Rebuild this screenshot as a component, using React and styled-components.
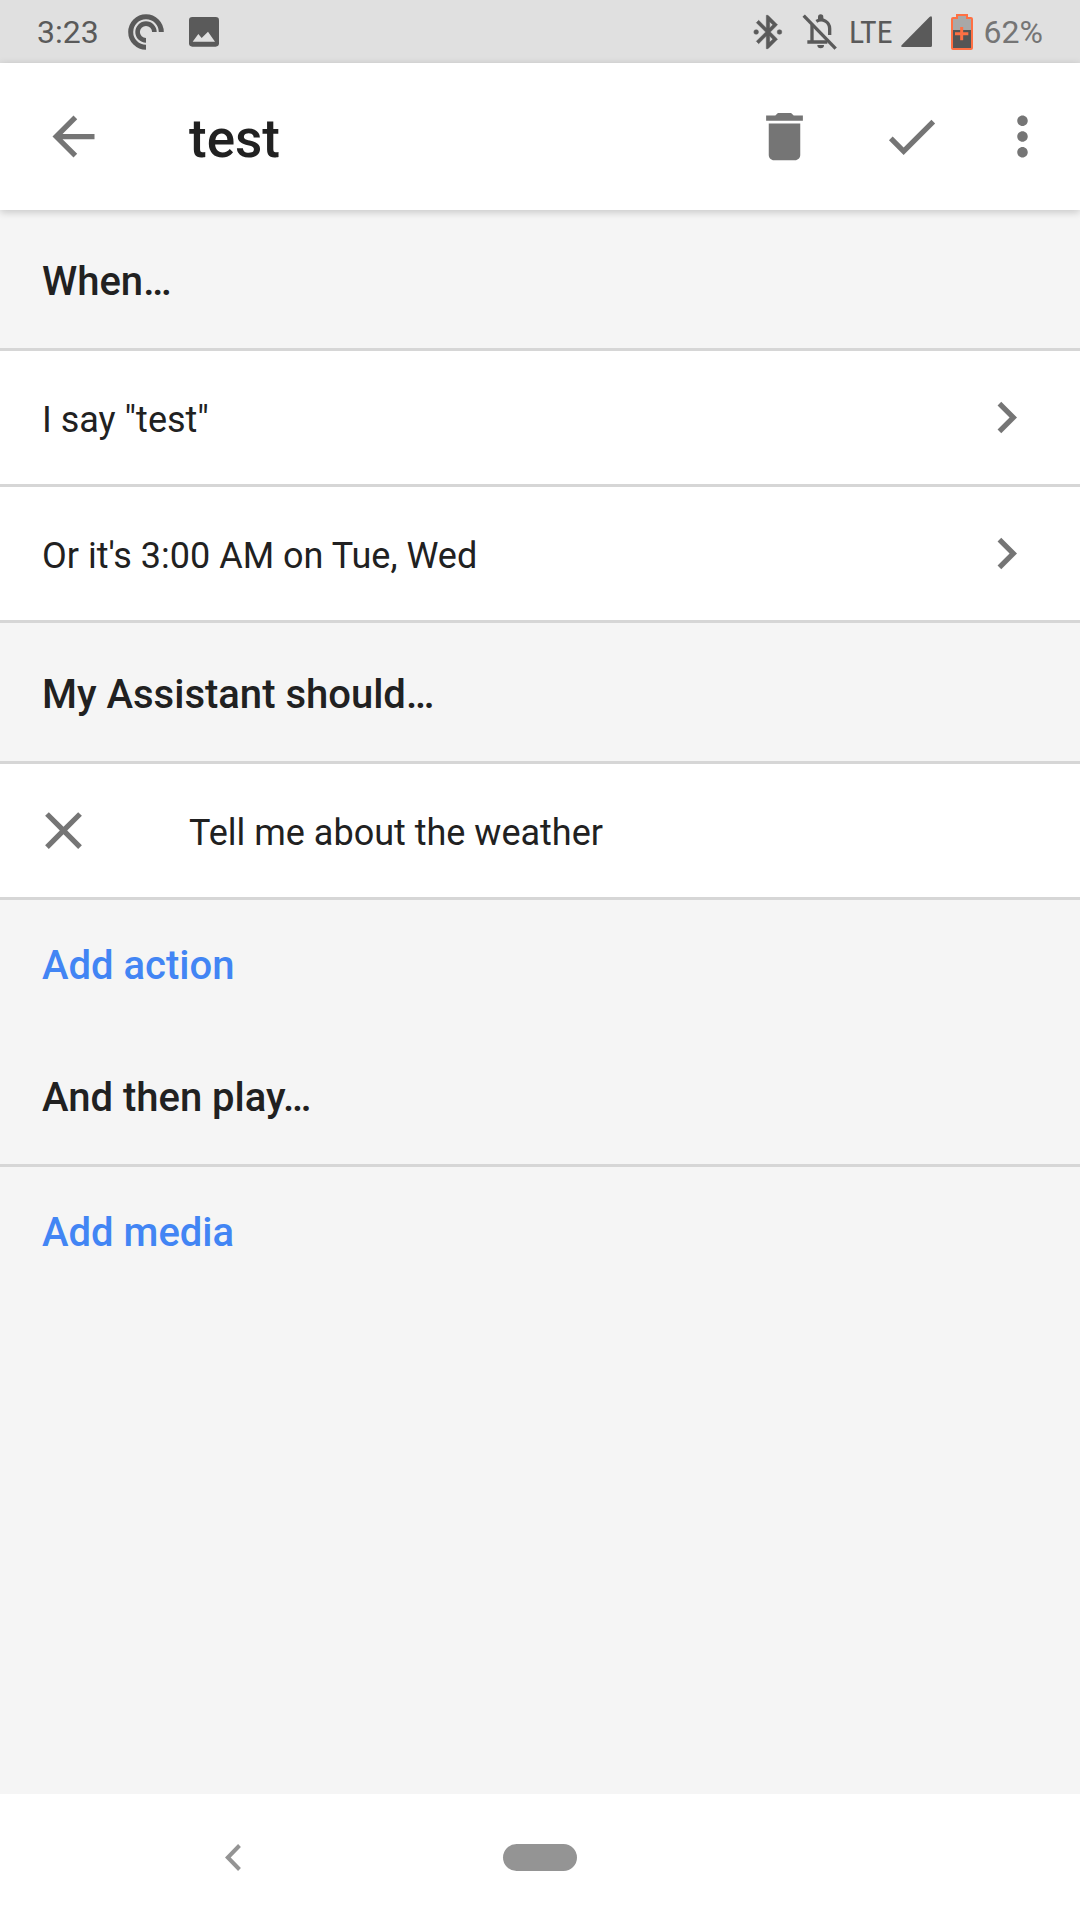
import React from "react";
import styled, { createGlobalStyle } from "styled-components";

const GlobalStyle = createGlobalStyle`
  *, *::before, *::after { box-sizing: border-box; }
  body {
    margin: 0;
    background: #f5f5f5;
    color: #212121;
    font-family: Roboto, "Liberation Sans", sans-serif;
  }
  button {
    margin: 0;
    padding: 0;
    border: 0;
    background: none;
    color: inherit;
    font: inherit;
    text-align: left;
    cursor: pointer;
  }
  svg { display: block; flex: none; }
`;

const Screen = styled.div`
  min-height: 100vh;
  display: flex;
  flex-direction: column;
`;

const StatusBar = styled.div`
  display: flex;
  align-items: center;
  justify-content: space-between;
  height: 63px;
  padding: 0 37px;
  background: #e0e0e0;
  color: #5a5a5a;
  font-size: 32px;
  line-height: 38px;
`;

const StatusGroup = styled.div`
  display: flex;
  align-items: center;
`;

const StatusItem = styled.span`
  margin-left: ${(p) => p.$gap}px;
`;

const Clock = styled.time`
  padding-top: 1px;
`;

const Network = styled(StatusItem)`
  font-family: "Roboto Condensed", Roboto, "Liberation Sans", sans-serif;
`;

const Percent = styled(StatusItem)`
  padding-top: 1px;
  color: #757575;
`;

const AppBar = styled.header`
  position: relative;
  display: flex;
  align-items: center;
  height: 147px;
  padding: 0 26px 0 42px;
  background: #fff;
  box-shadow: 0 2px 8px rgba(0, 0, 0, 0.2);
`;

const Title = styled.h1`
  flex: 1;
  margin: 0 0 0 84px;
  padding-top: 5px;
  font-size: 53px;
  font-weight: 500;
  line-height: 62px;
`;

const Actions = styled.div`
  display: flex;
  align-items: center;
`;

const IconButton = styled.button`
  margin-left: ${(p) => p.$gap || 0}px;
  color: #757575;
`;

const Main = styled.main`
  flex: 1;
`;

const SectionTitle = styled.h2`
  margin: 0;
  padding: 48px 42px 43px;
  border-bottom: 3px solid #d6d6d6;
  font-size: 40px;
  font-weight: 500;
  line-height: 47px;
`;

const List = styled.ul`
  margin: 0;
  padding: 0;
  list-style: none;
`;

const Item = styled.li`
  display: flex;
  align-items: center;
  background: #fff;
  border-bottom: 3px solid #d6d6d6;
`;

const RowButton = styled.button`
  flex: 1;
  display: flex;
  align-items: center;
  justify-content: space-between;
  height: 133px;
  padding: 0 42px;
`;

const RemoveButton = styled.button`
  margin: 0 94px 0 32px;
  color: #757575;
`;

const ActionButton = styled(RowButton)`
  padding: 0 42px 0 0;
`;

const RowText = styled.span`
  padding-top: 5px;
  font-size: 36px;
  line-height: 44px;
`;

const Chevron = styled.span`
  color: #757575;
`;

const AddButton = styled.button`
  display: block;
  width: 100%;
  padding: 42px 42px 37px;
  color: #4285f4;
  font-size: 40px;
  font-weight: 500;
  line-height: 47px;
`;

const NavBar = styled.nav`
  display: grid;
  grid-template-columns: repeat(3, 1fr);
  align-items: center;
  justify-items: center;
  height: 126px;
  padding: 0 80px;
  background: #fff;
  color: #949494;
`;

const HomePill = styled.button`
  width: 74px;
  height: 27px;
  border-radius: 14px;
  background: #949494;
`;

const Icon = ({ d }) => (
  <svg width="63" height="63" viewBox="0 0 24 24" fill="currentColor" aria-hidden="true">
    <path d={d} />
  </svg>
);

const ARROW = "M20 11H7.83l5.59-5.59L12 4l-8 8 8 8 1.41-1.41L7.83 13H20v-2z";
const TRASH = "M6 19c0 1.1.9 2 2 2h8c1.1 0 2-.9 2-2V7H6v12zM19 4h-3.5l-1-1h-5l-1 1H5v2h14V4z";
const CHECK = "M9 16.17L4.83 12l-1.42 1.41L9 19 21 7l-1.41-1.41z";
const MORE =
  "M12 8c1.1 0 2-.9 2-2s-.9-2-2-2-2 .9-2 2 .9 2 2 2zm0 2c-1.1 0-2 .9-2 2s.9 2 2 2 2-.9 2-2-.9-2-2-2zm0 6c-1.1 0-2 .9-2 2s.9 2 2 2 2-.9 2-2-.9-2-2-2z";
const CLOSE =
  "M19 6.41L17.59 5 12 10.59 6.41 5 5 6.41 10.59 12 5 17.59 6.41 19 12 13.41 17.59 19 19 17.59 13.41 12z";
const CHEVRON = "M10 6L8.59 7.41 13.17 12l-4.58 4.59L10 18l6-6z";

const PodcastIcon = () => (
  <svg width="36" height="36" viewBox="0 0 36 36" fill="none" stroke="currentColor" strokeWidth="5">
    <path d="M33.3 18A15.3 15.3 0 1 0 18 33.3" />
    <path d="M26.4 18A8.4 8.4 0 1 0 18 26.4" strokeWidth="4.6" />
  </svg>
);

const PhotoIcon = () => (
  <svg width="30" height="30" viewBox="0 0 90 90">
    <rect width="90" height="89" rx="10" fill="currentColor" />
    <path d="M11 74 28 51 38 63 57 44 78 74z" fill="#e0e0e0" />
  </svg>
);

const BluetoothIcon = () => (
  <svg width="40" height="40" viewBox="0 0 24 24" fill="currentColor" stroke="currentColor" strokeWidth="0.3">
    <circle cx="4.9" cy="12" r="1.4" />
    <circle cx="18.9" cy="12" r="1.4" />
    <path d="M17.71 7.71 12 2h-1v7.59L6.41 5 5 6.41 10.59 12 5 17.59 6.41 19 11 14.41V22h1l5.71-5.71-4.3-4.29 4.3-4.29zM13 5.83l1.88 1.88L13 9.59V5.83zm1.88 10.46L13 18.17v-3.76l1.88 1.88z" />
  </svg>
);

const BellOffIcon = () => (
  <svg width="35" height="37" viewBox="0 0 105 111" fill="none" stroke="currentColor" strokeWidth="10">
    <path d="M5 8 101 107" strokeWidth="10" />
    <path d="M30 36V87M16 87H76" />
    <path d="M43 25C62 14 83 27 83 47V66" />
    <path d="M48 22V12a8 8 0 0 1 16 0V22z" fill="currentColor" stroke="none" />
    <path d="M46 96H66A10 10 0 0 1 46 96z" fill="currentColor" stroke="none" />
  </svg>
);

const SignalIcon = () => (
  <svg width="31" height="31" viewBox="0 0 31 31" fill="currentColor">
    <path d="M28.500 1Q31-.8 31 2V29.500Q31 31 29.500 31H1.500Q-.8 31 .8 29z" />
  </svg>
);

const BatteryIcon = () => (
  <svg width="22" height="36" viewBox="0 0 66 108">
    <path d="M18 3H48V12H63V105H3V12H18z" fill="#a8a8a8" />
    <path d="M3 48H63V105H3z" fill="#555" />
    <path d="M18 3H48V12H60Q63 12 63 15V102Q63 105 60 105H6Q3 105 3 102V15Q3 12 6 12H18z" fill="none" stroke="#ff7043" strokeWidth="6" />
    <path d="M32 39V79M12 59H52" stroke="#ff7043" strokeWidth="9" />
  </svg>
);

const BackIcon = () => (
  <svg width="16" height="27" viewBox="0 0 16 27" fill="none" stroke="currentColor" strokeWidth="4">
    <path d="M14.500 1.500 2.800 13.500 14.500 25.500" />
  </svg>
);

const triggers = ['I say "test"', "Or it's 3:00 AM on Tue, Wed"];
const actions = ["Tell me about the weather"];

export default function App() {
  return (
    <Screen>
      <GlobalStyle />
      <StatusBar>
        <StatusGroup>
          <Clock>3:23</Clock>
          <StatusItem $gap={29}><PodcastIcon /></StatusItem>
          <StatusItem $gap={25}><PhotoIcon /></StatusItem>
        </StatusGroup>
        <StatusGroup>
          <BluetoothIcon />
          <StatusItem $gap={14}><BellOffIcon /></StatusItem>
          <Network $gap={12}>LTE</Network>
          <StatusItem $gap={8}><SignalIcon /></StatusItem>
          <StatusItem $gap={19}><BatteryIcon /></StatusItem>
          <Percent $gap={11}>62%</Percent>
        </StatusGroup>
      </StatusBar>

      <AppBar>
        <IconButton aria-label="Back"><Icon d={ARROW} /></IconButton>
        <Title>test</Title>
        <Actions>
          <IconButton aria-label="Delete"><Icon d={TRASH} /></IconButton>
          <IconButton $gap={64} aria-label="Save"><Icon d={CHECK} /></IconButton>
          <IconButton $gap={48} aria-label="More options"><Icon d={MORE} /></IconButton>
        </Actions>
      </AppBar>

      <Main>
        <SectionTitle>When…</SectionTitle>
        <List>
          {triggers.map((text) => (
            <Item key={text}>
              <RowButton>
                <RowText>{text}</RowText>
                <Chevron><Icon d={CHEVRON} /></Chevron>
              </RowButton>
            </Item>
          ))}
        </List>

        <SectionTitle>My Assistant should…</SectionTitle>
        <List>
          {actions.map((text) => (
            <Item key={text}>
              <RemoveButton aria-label="Remove action"><Icon d={CLOSE} /></RemoveButton>
              <ActionButton><RowText>{text}</RowText></ActionButton>
            </Item>
          ))}
        </List>
        <AddButton>Add action</AddButton>

        <SectionTitle>And then play…</SectionTitle>
        <AddButton>Add media</AddButton>
      </Main>

      <NavBar aria-label="System">
        <button aria-label="Back"><BackIcon /></button>
        <HomePill aria-label="Home" />
      </NavBar>
    </Screen>
  );
}
